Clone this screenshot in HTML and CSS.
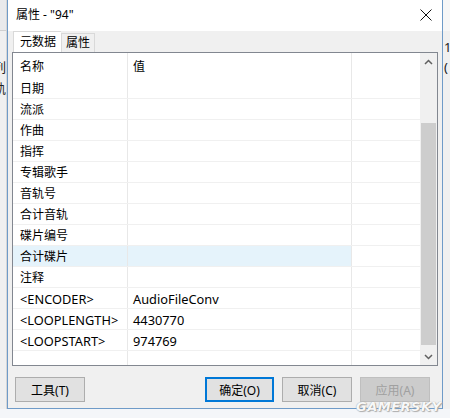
FILE: index.html
```html
<!DOCTYPE html>
<html lang="zh-CN">
<head>
  <meta charset="UTF-8" />
  <meta name="viewport" content="width=device-width, initial-scale=1.0"/>
  <title>属性 - "94"</title>
  <link rel="stylesheet" href="styles.css">
</head>
<body>
  <div class="desk">
    <div class="behind behind-left">
      <div class="behind-top"></div>
      <span class="peek peek-1">列</span>
      <span class="peek peek-2">轨</span>
    </div>

    <div class="window">
      <div class="titlebar">
        <span class="title">属性 - "94"</span>
        <svg class="close" width="12" height="12" viewBox="0 0 12 12">
          <path d="M0.5 0.5 L11.5 11.5 M11.5 0.5 L0.5 11.5" stroke="#111" stroke-width="1" fill="none"/>
        </svg>
      </div>

      <div class="tabs">
        <div class="tab active">元数据</div>
        <div class="tab">属性</div>
      </div>

      <div class="panel">
        <div class="listview">
          <div class="grid">
            <div class="row head"><div class="cell name">名称</div><div class="cell value">值</div><div class="cell rest"></div></div>
            <div class="row"><div class="cell name">日期</div><div class="cell value"></div><div class="cell rest"></div></div>
            <div class="row"><div class="cell name">流派</div><div class="cell value"></div><div class="cell rest"></div></div>
            <div class="row"><div class="cell name">作曲</div><div class="cell value"></div><div class="cell rest"></div></div>
            <div class="row"><div class="cell name">指挥</div><div class="cell value"></div><div class="cell rest"></div></div>
            <div class="row"><div class="cell name">专辑歌手</div><div class="cell value"></div><div class="cell rest"></div></div>
            <div class="row"><div class="cell name">音轨号</div><div class="cell value"></div><div class="cell rest"></div></div>
            <div class="row"><div class="cell name">合计音轨</div><div class="cell value"></div><div class="cell rest"></div></div>
            <div class="row"><div class="cell name">碟片编号</div><div class="cell value"></div><div class="cell rest"></div></div>
            <div class="row hover"><div class="cell name">合计碟片</div><div class="cell value"></div><div class="cell rest"></div></div>
            <div class="row"><div class="cell name">注释</div><div class="cell value"></div><div class="cell rest"></div></div>
            <div class="row en"><div class="cell name">&lt;ENCODER&gt;</div><div class="cell value">AudioFileConv</div><div class="cell rest"></div></div>
            <div class="row en"><div class="cell name">&lt;LOOPLENGTH&gt;</div><div class="cell value">4430770</div><div class="cell rest"></div></div>
            <div class="row en"><div class="cell name">&lt;LOOPSTART&gt;</div><div class="cell value">974769</div><div class="cell rest"></div></div>
            <div class="row filler"><div class="cell name"></div><div class="cell value"></div><div class="cell rest"></div></div>
          </div>

          <div class="scrollbar">
            <div class="arrow">
              <svg width="9" height="6" viewBox="0 0 9 6"><path d="M1 5 L4.5 1.5 L8 5" stroke="#606060" stroke-width="1.5" fill="none"/></svg>
            </div>
            <div class="track">
              <div class="thumb"></div>
            </div>
            <div class="arrow">
              <svg width="9" height="6" viewBox="0 0 9 6"><path d="M1 1 L4.5 4.5 L8 1" stroke="#606060" stroke-width="1.5" fill="none"/></svg>
            </div>
          </div>
        </div>
      </div>

      <div class="footer">
        <button class="btn">工具(T)</button>
        <div class="spacer"></div>
        <button class="btn default">确定(O)</button>
        <button class="btn">取消(C)</button>
        <button class="btn" disabled>应用(A)</button>
      </div>
    </div>

    <div class="behind behind-right">
      <span class="peek-r peek-r1">1</span>
      <span class="peek-r peek-r2">(</span>
    </div>
  </div>

  <div class="watermark">GAMERSKY</div>
</body>
</html>
```

FILE: styles.css
```css
* {
  box-sizing: border-box;
}
body {
  margin: 0;
  width: 450px;
  height: 418px;
  overflow: hidden;
  background: #f4f6f9;
  font-family: "Noto Sans", "Noto Sans CJK SC", sans-serif;
  font-size: 12px;
  color: #000;
  position: relative;
}
.desk {
  display: flex;
  height: 409px;
}

/* windows peeking out from behind the dialog */
.behind {
  width: 7px;
  background: #f0f0f0;
  overflow: hidden;
  display: flex;
  flex-direction: column;
}
.behind-left {
  border-right: 1px solid #d6d6d6;
}
.behind-top {
  height: 31px;
  background: #e9eaec;
  border-bottom: 1px solid #d0d0d0;
}
.peek {
  display: block;
  margin-left: -7px;
  font-size: 13px;
  line-height: 16px;
  color: #222;
}
.peek-1 {
  margin-top: 28px;
}
.peek-2 {
  margin-top: 5px;
}
.behind-right {
  width: 7px;
  border-top: 31px solid #f7f7f7;
  background: #f0f0f0;
}
.peek-r {
  display: block;
  margin-left: 1px;
  font-size: 13px;
  line-height: 16px;
  color: #222;
}
.peek-r1 {
  margin-top: 8px;
}
.peek-r2 {
  margin-top: 4px;
}

/* dialog */
.window {
  width: 436px;
  display: flex;
  flex-direction: column;
  background: #f0f0f0;
  border-left: 1px solid #6f9bc8;
  border-right: 1px solid #6f9bc8;
  border-bottom: 1px solid #6f9bc8;
}
.titlebar {
  height: 31px;
  background: #fff;
  display: flex;
  align-items: center;
  justify-content: space-between;
  padding: 0 10px 2px 8px;
}
.title {
  font-size: 12px;
  line-height: 16px;
}
.close {
  display: block;
}

.tabs {
  height: 21px;
  display: flex;
  align-items: flex-end;
  padding-left: 5px;
}
.tab {
  height: 19px;
  padding: 0 4px;
  line-height: 17px;
  border: 1px solid #d9d9d9;
  border-bottom: none;
  background: #f0f0f0;
  font-size: 12px;
}
.tab.active {
  height: 21px;
  line-height: 19px;
  background: #fff;
  padding: 0 5px 0 6px;
  border-right: none;
}

.panel {
  padding: 0 4px;
}
.listview {
  height: 314px;
  display: flex;
  background: #fff;
  border: 1px solid #828790;
}
.grid {
  width: 408px;
  display: flex;
  flex-direction: column;
}
.row {
  height: 21px;
  display: flex;
  border-bottom: 1px solid #f0f0f0;
}
.row.head {
  height: 25px;
  border-bottom: none;
}
.row.hover .name,
.row.hover .value {
  background: #e5f3fb;
}
.row.filler {
  flex: 1;
  border-bottom: none;
}
.cell {
  line-height: 20px;
  padding-top: 1px;
  font-size: 12px;
  white-space: nowrap;
  overflow: hidden;
}
.row.en .cell {
  font-size: 12.8px;
}
.row.head .cell {
  line-height: 25px;
}
.name {
  width: 115px;
  padding-left: 7px;
  border-right: 1px solid #e8e8e8;
}
.value {
  width: 224px;
  padding-left: 5px;
  border-right: 1px solid #e8e8e8;
}
.rest {
  flex: 1;
}

.scrollbar {
  width: 17px;
  display: flex;
  flex-direction: column;
  background: #f0f0f0;
}
.arrow {
  height: 17px;
  display: flex;
  align-items: center;
  justify-content: center;
}
.track {
  flex: 1;
  padding: 53px 0 3px;
}
.thumb {
  height: 222px;
  margin: 0 1px;
  background: #cdcdcd;
}

.footer {
  flex: 1;
  display: flex;
  align-items: flex-start;
  gap: 8px;
  padding: 11px 12px 0 7px;
}
.spacer {
  flex: 1;
}
.btn {
  width: 70px;
  height: 25px;
  border: 1px solid #adadad;
  background: #e1e1e1;
  font-family: "Noto Sans", "Noto Sans CJK SC", sans-serif;
  font-size: 12px;
  color: #000;
  padding: 0;
}
.btn.default {
  border: 2px solid #0078d7;
  width: 69px;
}
.btn:disabled {
  background: #cccccc;
  border-color: #bfbfbf;
  color: #a0a0a0;
}

.watermark {
  position: absolute;
  left: 356px;
  top: 399px;
  font-family: "DejaVu Sans", sans-serif;
  font-weight: bold;
  font-style: italic;
  font-size: 13px;
  letter-spacing: 0.5px;
  color: rgba(255, 255, 255, 0.95);
  text-shadow: 0 0 1px #8c8c8c, 1px 1px 1px #b0b0b0;
}
```
